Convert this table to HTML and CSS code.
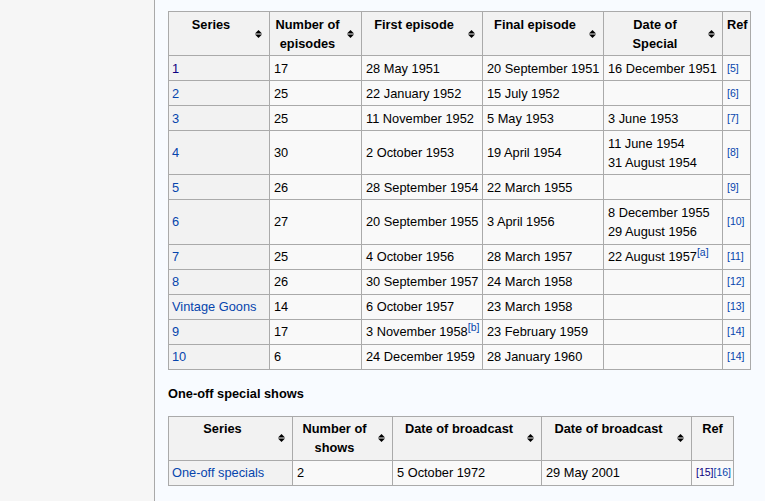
FILE: index.html
```html
<!DOCTYPE html>
<html lang="en">
<head>
<meta charset="utf-8">
<title>The Goon Show – series</title>
<link rel="stylesheet" href="styles.css">
</head>
<body>
<div class="sidebar"></div>
<main class="content">
  <table class="wikitable t1">
    <colgroup>
      <col class="w101"><col class="w92"><col class="w121"><col class="w121"><col class="w119"><col class="w28">
    </colgroup>
    <thead>
      <tr>
        <th class="sortable">Series<span class="sort"><svg width="7" height="8" viewBox="0 0 7 8"><polygon points="3.5,0 7,3.5 0,3.5"/><polygon points="0,4.5 7,4.5 3.5,8"/></svg></span></th>
        <th class="sortable">Number of episodes<span class="sort"><svg width="7" height="8" viewBox="0 0 7 8"><polygon points="3.5,0 7,3.5 0,3.5"/><polygon points="0,4.5 7,4.5 3.5,8"/></svg></span></th>
        <th class="sortable">First episode<span class="sort"><svg width="7" height="8" viewBox="0 0 7 8"><polygon points="3.5,0 7,3.5 0,3.5"/><polygon points="0,4.5 7,4.5 3.5,8"/></svg></span></th>
        <th class="sortable">Final episode<span class="sort"><svg width="7" height="8" viewBox="0 0 7 8"><polygon points="3.5,0 7,3.5 0,3.5"/><polygon points="0,4.5 7,4.5 3.5,8"/></svg></span></th>
        <th class="sortable">Date of<br>Special<span class="sort"><svg width="7" height="8" viewBox="0 0 7 8"><polygon points="3.5,0 7,3.5 0,3.5"/><polygon points="0,4.5 7,4.5 3.5,8"/></svg></span></th>
        <th class="refhead narrow">Ref</th>
      </tr>
    </thead>
    <tbody>
      <tr><th class="rowhead"><a class="visited" href="#">1</a></th><td>17</td><td>28 May 1951</td><td>20 September 1951</td><td>16 December 1951</td><td class="refcell"><a class="ref" href="#">[5]</a></td></tr>
      <tr><th class="rowhead"><a href="#">2</a></th><td>25</td><td>22 January 1952</td><td>15 July 1952</td><td></td><td class="refcell"><a class="ref" href="#">[6]</a></td></tr>
      <tr><th class="rowhead"><a href="#">3</a></th><td>25</td><td>11 November 1952</td><td>5 May 1953</td><td>3 June 1953</td><td class="refcell"><a class="ref" href="#">[7]</a></td></tr>
      <tr><th class="rowhead"><a href="#">4</a></th><td>30</td><td>2 October 1953</td><td>19 April 1954</td><td>11 June 1954<br>31 August 1954</td><td class="refcell"><a class="ref" href="#">[8]</a></td></tr>
      <tr><th class="rowhead"><a href="#">5</a></th><td>26</td><td>28 September 1954</td><td>22 March 1955</td><td></td><td class="refcell"><a class="ref" href="#">[9]</a></td></tr>
      <tr><th class="rowhead"><a href="#">6</a></th><td>27</td><td>20 September 1955</td><td>3 April 1956</td><td>8 December 1955<br>29 August 1956</td><td class="refcell"><a class="ref" href="#">[10]</a></td></tr>
      <tr><th class="rowhead"><a href="#">7</a></th><td>25</td><td>4 October 1956</td><td>28 March 1957</td><td>22 August 1957<sup><a href="#">[a]</a></sup></td><td class="refcell"><a class="ref" href="#">[11]</a></td></tr>
      <tr><th class="rowhead"><a href="#">8</a></th><td>26</td><td>30 September 1957</td><td>24 March 1958</td><td></td><td class="refcell"><a class="ref" href="#">[12]</a></td></tr>
      <tr><th class="rowhead"><a href="#">Vintage Goons</a></th><td>14</td><td>6 October 1957</td><td>23 March 1958</td><td></td><td class="refcell"><a class="ref" href="#">[13]</a></td></tr>
      <tr><th class="rowhead"><a href="#">9</a></th><td>17</td><td>3 November 1958<sup><a href="#">[b]</a></sup></td><td>23 February 1959</td><td></td><td class="refcell"><a class="ref" href="#">[14]</a></td></tr>
      <tr><th class="rowhead"><a href="#">10</a></th><td>6</td><td>24 December 1959</td><td>28 January 1960</td><td></td><td class="refcell"><a class="ref" href="#">[14]</a></td></tr>
    </tbody>
  </table>

  <p class="subhead">One-off special shows</p>

  <table class="wikitable t2">
    <colgroup>
      <col class="w124"><col class="w100"><col class="w149"><col class="w150"><col class="w42">
    </colgroup>
    <thead>
      <tr>
        <th class="sortable">Series<span class="sort"><svg width="7" height="8" viewBox="0 0 7 8"><polygon points="3.5,0 7,3.5 0,3.5"/><polygon points="0,4.5 7,4.5 3.5,8"/></svg></span></th>
        <th class="sortable">Number of shows<span class="sort"><svg width="7" height="8" viewBox="0 0 7 8"><polygon points="3.5,0 7,3.5 0,3.5"/><polygon points="0,4.5 7,4.5 3.5,8"/></svg></span></th>
        <th class="sortable">Date of broadcast<span class="sort"><svg width="7" height="8" viewBox="0 0 7 8"><polygon points="3.5,0 7,3.5 0,3.5"/><polygon points="0,4.5 7,4.5 3.5,8"/></svg></span></th>
        <th class="sortable">Date of broadcast<span class="sort"><svg width="7" height="8" viewBox="0 0 7 8"><polygon points="3.5,0 7,3.5 0,3.5"/><polygon points="0,4.5 7,4.5 3.5,8"/></svg></span></th>
        <th class="refhead">Ref</th>
      </tr>
    </thead>
    <tbody>
      <tr><th class="rowhead"><a href="#">One-off specials</a></th><td>2</td><td>5 October 1972</td><td>29 May 2001</td><td class="refcell"><a class="ref visited" href="#">[15]</a><a class="ref" href="#">[16]</a></td></tr>
    </tbody>
  </table>
</main>
</body>
</html>
```

FILE: styles.css
```css
html, body {
  margin: 0;
  padding: 0;
}

body {
  display: flex;
  min-height: 501px;
  background: #f8fbff;
  font-family: "Liberation Sans", Arial, sans-serif;
  color: #000;
}

.sidebar {
  flex: none;
  width: 154px;
  background: #f6f6f6;
}

.content {
  flex: 1;
  border-left: 1px solid #a9a9a9;
  padding: 11px 0 0 13px;
  font-size: 12.8px;
  line-height: 19px;
}

a {
  color: #0645ad;
  text-decoration: none;
}

a.visited {
  color: #0b0080;
}

.wikitable {
  border-collapse: collapse;
  table-layout: fixed;
  background: #f9f9f9;
  border: 1px solid #aaa;
  font-size: 12.8px;
  line-height: 19px;
}

.t1 { width: 583px; }
.t2 { width: 566px; }

.w101 { width: 101px; }
.w92  { width: 92px; }
.w121 { width: 121px; }
.w119 { width: 119px; }
.w28  { width: 28px; }
.w124 { width: 124px; }
.w100 { width: 100px; }
.w149 { width: 149px; }
.w150 { width: 150px; }
.w42  { width: 42px; }

.wikitable th,
.wikitable td {
  border: 1px solid #aaa;
  padding: 2.5px 4px 2.6px;
  white-space: nowrap;
}

.wikitable td {
  vertical-align: middle;
  text-align: left;
}

.wikitable thead th {
  background: #f2f2f2;
  font-weight: bold;
  text-align: center;
  vertical-align: top;
  white-space: normal;
}

.wikitable th.sortable {
  position: relative;
  padding: 2.5px 21px 2.5px 5px;
}

.sort {
  position: absolute;
  right: 7px;
  top: 0;
  bottom: 0;
  margin: auto 0;
  height: 8px;
  width: 7px;
  display: block;
  line-height: 0;
}

.sort svg {
  display: block;
  fill: #000;
}

.wikitable th.refhead {
  padding: 2.5px 2px;
}

.wikitable th.refhead.narrow {
  text-align: left;
  padding-left: 4px;
}

.wikitable th.rowhead {
  background: #f2f2f2;
  font-weight: normal;
  text-align: left;
  vertical-align: middle;
  padding-left: 3px;
}

.wikitable td.refcell {
  padding-left: 4px;
  padding-right: 1px;
}

a.ref {
  font-size: 10.5px;
  vertical-align: 1px;
}

sup {
  font-size: 10.5px;
  line-height: 0;
  vertical-align: 5px;
}

.subhead {
  margin: 14px 0 12.5px;
  font-weight: bold;
}
```
